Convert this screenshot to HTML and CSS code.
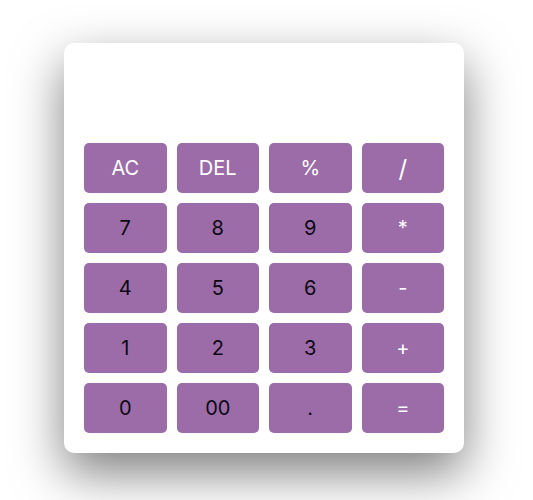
FILE: index.html
```html
<!DOCTYPE html>
<html lang="en">
<head>
<meta charset="utf-8">
<title>Calculator</title>
<link rel="stylesheet" href="styles.css">
</head>
<body>
<main class="page">
  <div class="calculator">
    <div class="display"></div>
    <div class="keys">
      <button class="key op">AC</button>
      <button class="key op">DEL</button>
      <button class="key op">%</button>
      <button class="key op slash">/</button>
      <button class="key">7</button>
      <button class="key">8</button>
      <button class="key">9</button>
      <button class="key op">*</button>
      <button class="key">4</button>
      <button class="key">5</button>
      <button class="key">6</button>
      <button class="key op">-</button>
      <button class="key">1</button>
      <button class="key">2</button>
      <button class="key">3</button>
      <button class="key op">+</button>
      <button class="key">0</button>
      <button class="key">00</button>
      <button class="key">.</button>
      <button class="key op">=</button>
    </div>
  </div>
</main>
</body>
</html>
```
FILE: styles.css
```css
* { box-sizing: border-box; }
html, body { margin: 0; padding: 0; background: #fff; }
.page {
  width: 533px;
  height: 500px;
  padding: 43px 0 0 64px;
  overflow: hidden;
}
.calculator {
  width: 400px;
  height: 410px;
  background: #fff;
  border-radius: 10px;
  padding: 20px;
  display: flex;
  flex-direction: column;
  gap: 10px;
  box-shadow: 0 20px 50px rgba(0, 0, 0, 0.5);
}
.display { height: 70px; }
.keys {
  display: grid;
  grid-template-columns: repeat(4, 1fr);
  grid-auto-rows: 50px;
  gap: 10px;
}
.key {
  border: none;
  border-radius: 5px;
  background: #9b6ca7;
  color: #0d0a14;
  font-family: Inter, "Open Sans", sans-serif;
  font-size: 20px;
  padding: 0;
  display: flex;
  align-items: center;
  justify-content: center;
}
.key.op { color: #fff; }
.key.slash { font-size: 24px; }
```
